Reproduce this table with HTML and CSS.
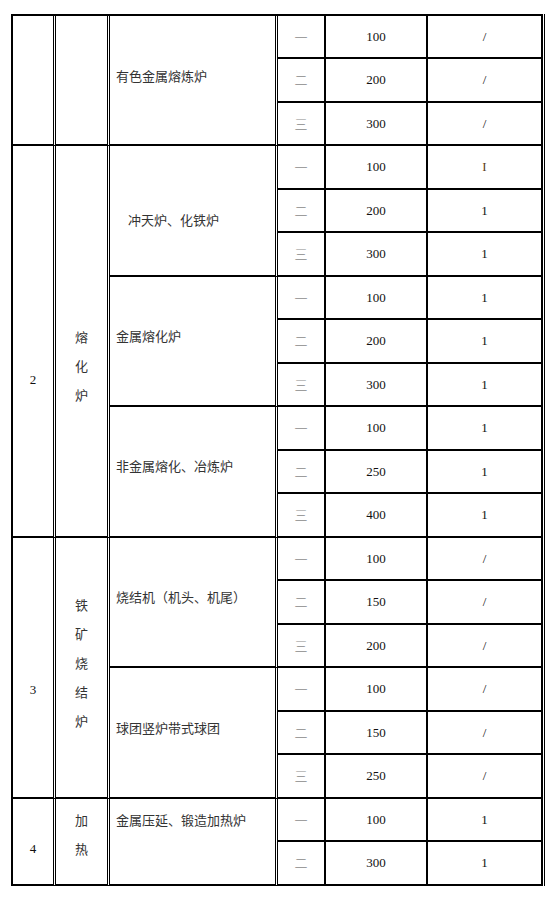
FILE: index.html
```html
<!DOCTYPE html>
<html lang="zh">
<head>
<meta charset="utf-8">
<link rel="stylesheet" href="styles.css">
</head>
<body>
<div class="frame">
<table class="grid">
<colgroup><col class="w1"><col class="w2"><col class="w3"><col class="w4"><col class="w5"><col class="w6"></colgroup>
<tbody>
<tr class="a"><td class="c1" rowspan="3"></td><td class="c2" rowspan="3"></td><td class="c3 up9" rowspan="3">有色金属熔炼炉</td><td class="c4">一</td><td class="c5">100</td><td class="c6">/</td></tr>
<tr class="b"><td class="c4">二</td><td class="c5">200</td><td class="c6">/</td></tr>
<tr class="a"><td class="c4">三</td><td class="c5">300</td><td class="c6">/</td></tr>

<tr class="b"><td class="c1 n2" rowspan="9">2</td><td class="c2 v2" rowspan="9">熔<br>化<br>炉</td><td class="c3 indent" rowspan="3">冲天炉、化铁炉</td><td class="c4">一</td><td class="c5">100</td><td class="c6 roman">I</td></tr>
<tr class="a"><td class="c4">二</td><td class="c5">200</td><td class="c6">1</td></tr>
<tr class="b"><td class="c4">三</td><td class="c5">300</td><td class="c6">1</td></tr>
<tr class="a"><td class="c3 up10" rowspan="3">金属熔化炉</td><td class="c4">一</td><td class="c5">100</td><td class="c6">1</td></tr>
<tr class="b"><td class="c4">二</td><td class="c5">200</td><td class="c6">1</td></tr>
<tr class="a"><td class="c4">三</td><td class="c5">300</td><td class="c6">1</td></tr>
<tr class="b"><td class="c3 up11" rowspan="3">非金属熔化、冶炼炉</td><td class="c4">一</td><td class="c5">100</td><td class="c6">1</td></tr>
<tr class="a"><td class="c4">二</td><td class="c5">250</td><td class="c6">1</td></tr>
<tr class="b"><td class="c4">三</td><td class="c5">400</td><td class="c6">1</td></tr>

<tr class="a"><td class="c1 n3" rowspan="6">3</td><td class="c2 v3" rowspan="6">铁<br>矿<br>烧<br>结<br>炉</td><td class="c3 up10" rowspan="3">烧结机（机头、机尾）</td><td class="c4">一</td><td class="c5">100</td><td class="c6">/</td></tr>
<tr class="b"><td class="c4">二</td><td class="c5">150</td><td class="c6">/</td></tr>
<tr class="a"><td class="c4">三</td><td class="c5">200</td><td class="c6">/</td></tr>
<tr class="b"><td class="c3 up9" rowspan="3">球团竖炉带式球团</td><td class="c4">一</td><td class="c5">100</td><td class="c6">/</td></tr>
<tr class="a"><td class="c4">二</td><td class="c5">150</td><td class="c6">/</td></tr>
<tr class="b"><td class="c4">三</td><td class="c5">250</td><td class="c6">/</td></tr>

<tr class="a"><td class="c1 n4" rowspan="2">4</td><td class="c2 v4" rowspan="2">加<br>热</td><td class="c3 top" rowspan="2">金属压延、锻造加热炉</td><td class="c4">一</td><td class="c5">100</td><td class="c6">1</td></tr>
<tr class="b"><td class="c4">二</td><td class="c5">300</td><td class="c6">1</td></tr>
</tbody>
</table>
</div>
</body>
</html>
```

FILE: styles.css
```css
html, body {
  margin: 0;
  padding: 0;
  background: #ffffff;
}

.frame {
  display: inline-block;
  margin: 14px 0 0 11px;
  padding-right: 1px;
  border-right: 1px solid #000;
}

.grid {
  box-sizing: border-box;
  width: 532px;
  table-layout: fixed;
  border-collapse: separate;
  border-spacing: 0;
  border-top: 2px solid #000;
  border-left: 2px solid #000;
  font-family: "Liberation Serif", "Noto Sans CJK SC", serif;
  font-size: 13px;
  color: #222;
}

.w1 { width: 43px; }
.w2 { width: 54px; }
.w3 { width: 168px; }
.w4 { width: 48px; }
.w5 { width: 102px; }
.w6 { width: 115px; }

tr.a { height: 43px; }
tr.b { height: 44px; }

.grid td {
  box-sizing: border-box;
  padding: 0;
  border-bottom: 2px solid #000;
  line-height: 18px;
  vertical-align: middle;
  text-align: center;
}

.grid td.c1,
.grid td.c2,
.grid td.c3 {
  border-right: 3px double #000;
}

.grid td.c4,
.grid td.c5,
.grid td.c6 {
  border-right: 2px solid #000;
}

.grid td.c2,
.grid td.c3,
.grid td.c4 {
  font-family: "Noto Sans CJK SC", sans-serif;
  color: #333;
}

.grid td.c3 {
  text-align: left;
  padding-left: 6px;
}

.grid td.c4 {
  color: #8a8a8a;
  font-weight: 300;
}

.grid td.c5,
.grid td.c6 {
  color: #111;
}

.grid td.roman {
  color: #5a3f1a;
}

.grid td.up9 { padding-bottom: 9px; }
.grid td.up10 { padding-bottom: 10px; }
.grid td.up11 { padding-bottom: 11px; }
.grid td.indent { padding-left: 18px; padding-top: 19px; }
.grid td.top { vertical-align: top; padding-top: 12px; }

.grid td.c1 { color: #111; }
.grid td.n2 { padding-top: 78px; }
.grid td.n3 { padding-top: 45px; }
.grid td.n4 { padding-top: 15px; }

.grid td.c2 { line-height: 29px; }
.grid td.v2 { padding-top: 48px; }
.grid td.v3 { padding-bottom: 11px; }
.grid td.v4 { padding-bottom: 15px; }
```
